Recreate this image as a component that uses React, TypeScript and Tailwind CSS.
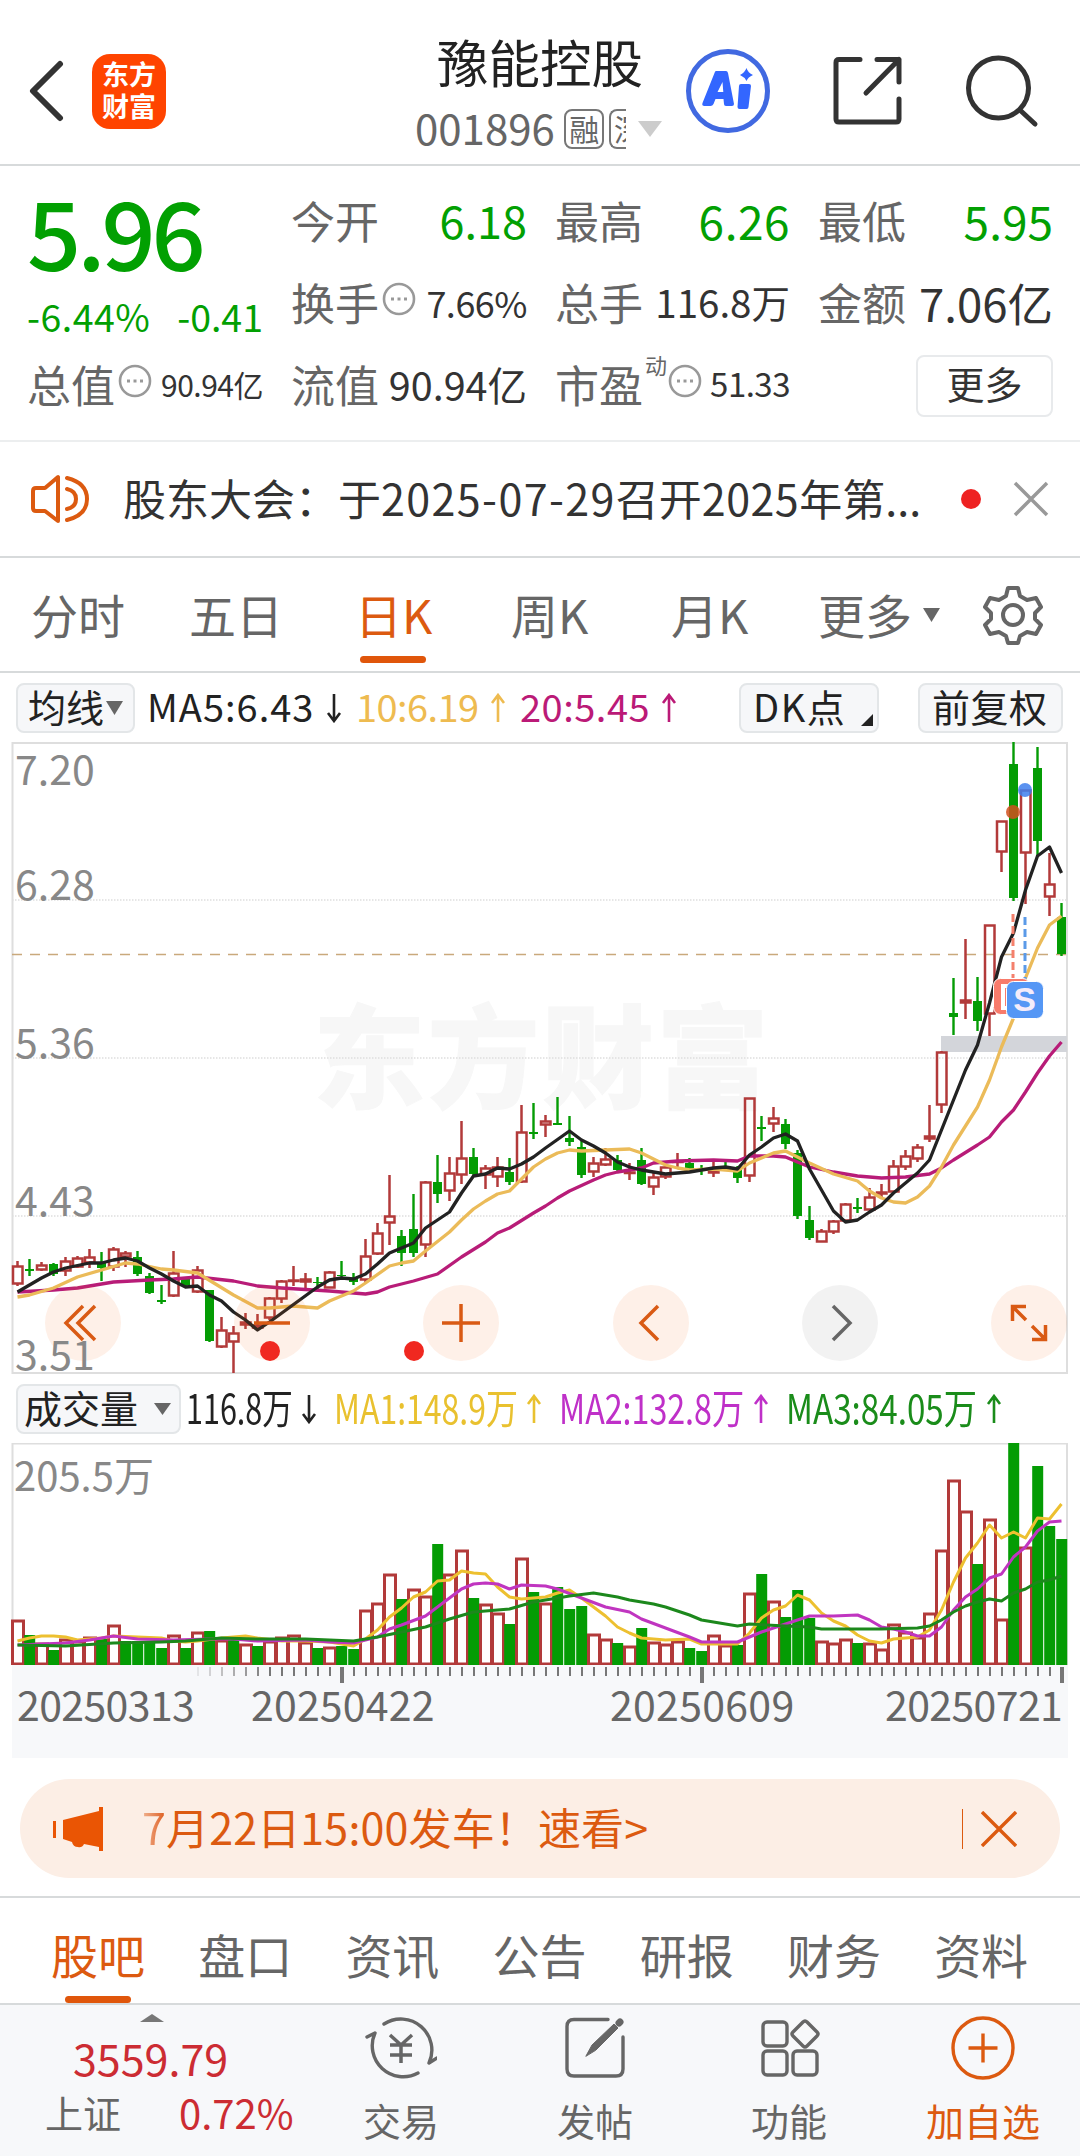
import type { ReactNode } from 'react';
import { clsx } from 'clsx';

// direction, high, body top, body bottom, low (chart space, y grows downwards)
type Candle = ['r' | 'g', number, number, number, number];
type Point = [number, number];

const RED = '#b23a3a';
const GREEN = '#049c04';
const FIRST_X = 17.5;
const STEP = 12;

const candles: Candle[] = [
    ['r', 1261, 1266, 1284, 1286], ['g', 1259, 1269, 1271, 1276], ['r', 1262, 1265, 1270, 1271], ['g', 1263, 1264, 1274, 1276],
    ['r', 1257, 1261, 1271, 1276], ['r', 1256, 1258, 1267, 1268], ['r', 1249, 1257, 1263, 1268], ['g', 1252, 1262, 1268, 1281],
    ['r', 1247, 1249, 1267, 1271], ['r', 1251, 1253, 1257, 1267], ['g', 1251, 1257, 1274, 1276], ['g', 1273, 1276, 1293, 1294],
    ['g', 1285, 1300, 1302, 1304], ['r', 1251, 1273, 1296, 1297], ['g', 1277, 1279, 1285, 1287], ['r', 1266, 1270, 1292, 1293],
    ['g', 1290, 1290, 1341, 1342], ['r', 1317, 1330, 1347, 1348], ['r', 1326, 1333, 1342, 1373], ['r', 1313, 1322, 1325, 1329],
    ['r', 1314, 1325, 1328, 1330], ['r', 1297, 1298, 1318, 1320], ['r', 1280, 1281, 1299, 1303], ['r', 1266, 1280, 1281, 1286],
    ['r', 1273, 1279, 1282, 1289], ['g', 1277, 1282, 1283, 1289], ['r', 1271, 1272, 1288, 1288], ['g', 1261, 1275, 1276, 1277],
    ['g', 1273, 1278, 1282, 1285], ['r', 1239, 1256, 1280, 1283], ['r', 1223, 1233, 1254, 1255], ['r', 1175, 1216, 1223, 1245],
    ['g', 1230, 1236, 1253, 1266], ['g', 1194, 1229, 1253, 1257], ['r', 1181, 1182, 1245, 1257], ['g', 1155, 1182, 1194, 1203],
    ['r', 1157, 1173, 1191, 1201], ['r', 1121, 1158, 1175, 1184], ['g', 1148, 1157, 1174, 1175], ['r', 1165, 1168, 1175, 1189],
    ['r', 1157, 1167, 1177, 1187], ['g', 1158, 1172, 1182, 1185], ['r', 1105, 1132, 1182, 1183], ['g', 1103, 1132, 1134, 1139],
    ['r', 1115, 1121, 1125, 1137], ['g', 1097, 1123, 1125, 1125], ['g', 1116, 1138, 1142, 1146], ['g', 1141, 1147, 1175, 1178],
    ['r', 1157, 1163, 1172, 1177], ['r', 1148, 1159, 1165, 1166], ['g', 1155, 1160, 1170, 1171], ['r', 1163, 1172, 1173, 1180],
    ['g', 1148, 1160, 1184, 1185], ['r', 1173, 1177, 1187, 1195], ['r', 1165, 1167, 1177, 1179], ['r', 1153, 1161, 1162, 1168],
    ['g', 1158, 1163, 1169, 1171], ['g', 1165, 1170, 1171, 1175], ['r', 1162, 1170, 1173, 1177], ['g', 1162, 1166, 1169, 1170],
    ['g', 1166, 1170, 1178, 1183], ['r', 1098, 1098, 1176, 1182], ['g', 1116, 1127, 1129, 1141], ['r', 1107, 1118, 1124, 1132],
    ['g', 1119, 1124, 1144, 1149], ['g', 1150, 1153, 1216, 1219], ['g', 1206, 1220, 1238, 1240], ['r', 1229, 1231, 1242, 1242],
    ['r', 1220, 1221, 1232, 1234], ['r', 1203, 1204, 1221, 1221], ['g', 1198, 1207, 1209, 1213], ['r', 1188, 1197, 1210, 1210],
    ['r', 1184, 1192, 1194, 1197], ['r', 1160, 1166, 1192, 1193], ['r', 1150, 1156, 1167, 1170], ['r', 1144, 1147, 1159, 1162],
    ['r', 1105, 1136, 1139, 1142], ['r', 1051, 1052, 1105, 1113], ['g', 978, 1013, 1017, 1035], ['r', 939, 1000, 1003, 1019],
    ['g', 977, 1001, 1021, 1031], ['r', 925, 925, 1014, 1036], ['r', 821, 821, 852, 872], ['g', 742, 764, 898, 901],
    ['r', 790, 790, 853, 904], ['g', 747, 768, 841, 856], ['r', 853, 884, 897, 916], ['g', 903, 917, 954, 956],
];

const volumeSides = 'rgrgrrrgrgggg' + 'rgrgrgrgrrrrgrgg' + 'rrrgrrgrrgrrgrgrggg' + 'rrgrgrrrggrrg' + 'rgrgggrrrgrrrrrrrr' + 'rgrrgrggg';
const volumeTops = [
    1620, 1635, 1643, 1650, 1639, 1641, 1637, 1639, 1625, 1641, 1641, 1643, 1648, 1635, 1648, 1632, 1631, 1640, 1640, 1644, 1646, 1641,
    1637, 1635, 1642, 1648, 1647, 1646, 1649, 1610, 1603, 1574, 1599, 1589, 1596, 1544, 1574, 1550, 1598, 1604, 1613, 1624, 1558, 1592,
    1603, 1587, 1609, 1606, 1634, 1639, 1643, 1646, 1628, 1642, 1644, 1641, 1648, 1651, 1635, 1645, 1645, 1593, 1574, 1601, 1617, 1590,
    1618, 1641, 1643, 1639, 1643, 1643, 1649, 1624, 1632, 1637, 1613, 1550, 1480, 1511, 1564, 1519, 1619, 1443, 1547, 1466, 1526, 1539,
];

const ma5: Point[] = [
    [0, 1292], [2, 1278], [3, 1272], [4, 1268], [6, 1263], [7, 1263], [8, 1260], [9, 1258], [10, 1261], [11, 1268], [12, 1274], [13, 1281],
    [14, 1287], [15, 1286], [16, 1295], [17, 1301], [18, 1312], [19, 1320], [20, 1330], [21, 1322], [25, 1287], [26, 1280], [27, 1278],
    [28, 1279], [29, 1274], [30, 1264], [31, 1253], [32, 1248], [33, 1243], [34, 1228], [35, 1220], [36, 1212], [37, 1193], [38, 1176],
    [39, 1174], [40, 1168], [41, 1169], [42, 1164], [43, 1157], [44, 1148], [46, 1131], [47, 1140], [48, 1146], [49, 1153], [50, 1162],
    [51, 1167], [52, 1170], [53, 1172], [54, 1174], [55, 1173], [56, 1172], [58, 1168], [59, 1167], [60, 1169], [61, 1155], [62, 1147],
    [63, 1138], [64, 1134], [65, 1141], [66, 1169], [67, 1190], [68, 1211], [69, 1222], [70, 1220], [71, 1212], [72, 1205], [73, 1193],
    [74, 1183], [75, 1173], [76, 1160], [77, 1130], [78, 1100], [79, 1070], [80, 1045], [81, 1003], [82, 957], [83, 933], [84, 890],
    [85, 856], [86, 847], [87, 873],
];
const ma10: Point[] = [
    [0, 1297], [1, 1295], [3, 1288], [5, 1277], [9, 1263], [10, 1264], [12, 1269], [13, 1270], [15, 1273], [18, 1295], [20, 1308], [21, 1308],
    [23, 1306], [25, 1308], [26, 1301], [28, 1291], [29, 1283], [31, 1266], [32, 1263], [33, 1261], [34, 1251], [36, 1232], [37, 1220],
    [38, 1209], [39, 1201], [40, 1194], [41, 1191], [42, 1179], [43, 1167], [44, 1159], [45, 1153], [46, 1150], [47, 1151], [49, 1150],
    [51, 1149], [52, 1153], [53, 1159], [54, 1165], [55, 1168], [56, 1170], [58, 1169], [60, 1171], [61, 1163], [62, 1158], [63, 1153],
    [64, 1151], [65, 1157], [66, 1163], [68, 1174], [70, 1181], [71, 1191], [72, 1198], [73, 1202], [74, 1203], [75, 1197], [76, 1186],
    [77, 1167], [78, 1145], [79, 1126], [80, 1107], [81, 1080], [82, 1047], [83, 1018], [84, 978], [85, 948], [86, 925], [87, 916],
];
const ma20: Point[] = [
    [0, 1292], [3, 1290], [5, 1288], [8, 1282], [11, 1280], [13, 1279], [15, 1277], [18, 1281], [20, 1286], [22, 1288], [26, 1291], [29, 1294],
    [30, 1292], [31, 1287], [33, 1281], [35, 1274], [37, 1257], [39, 1242], [40, 1233], [41, 1228], [43, 1213], [44, 1206], [45, 1198],
    [46, 1191], [48, 1180], [49, 1175], [50, 1172], [52, 1168], [53, 1163], [55, 1161], [58, 1160], [60, 1161], [61, 1156], [63, 1156],
    [64, 1157], [65, 1162], [66, 1167], [68, 1172], [70, 1176], [72, 1178], [74, 1177], [76, 1174], [77, 1168], [78, 1160], [80, 1145],
    [81, 1137], [82, 1122], [83, 1110], [84, 1092], [85, 1073], [86, 1056], [87, 1042],
];
const vol1: Point[] = [
    [0, 1641], [1, 1638], [2, 1636], [3, 1636], [4, 1637], [5, 1640], [7, 1638], [8, 1636], [10, 1637], [12, 1638], [13, 1641], [14, 1642],
    [15, 1641], [17, 1638], [19, 1636], [20, 1638], [22, 1641], [24, 1641], [26, 1642], [27, 1644], [28, 1646], [29, 1639], [30, 1630],
    [31, 1617], [32, 1608], [33, 1597], [34, 1592], [35, 1581], [36, 1580], [37, 1571], [38, 1573], [39, 1574], [40, 1587], [41, 1597],
    [42, 1599], [44, 1597], [45, 1593], [46, 1590], [47, 1598], [48, 1607], [49, 1616], [50, 1627], [51, 1633], [52, 1638], [54, 1640],
    [56, 1639], [57, 1644], [60, 1644], [61, 1633], [62, 1618], [63, 1610], [64, 1606], [65, 1595], [66, 1600], [67, 1613], [68, 1621],
    [69, 1626], [70, 1635], [71, 1641], [72, 1643], [73, 1639], [75, 1637], [76, 1630], [77, 1610], [78, 1582], [79, 1558], [80, 1543],
    [81, 1525], [82, 1538], [83, 1532], [84, 1538], [85, 1518], [86, 1519], [87, 1504],
];
const vol2: Point[] = [
    [0, 1645], [4, 1643], [6, 1640], [8, 1636], [10, 1639], [13, 1640], [16, 1639], [18, 1639], [20, 1641], [24, 1640], [26, 1642], [28, 1643],
    [29, 1640], [30, 1637], [31, 1629], [32, 1625], [34, 1616], [35, 1607], [36, 1598], [37, 1589], [38, 1584], [39, 1583], [40, 1584],
    [41, 1589], [42, 1585], [44, 1586], [45, 1589], [47, 1598], [49, 1607], [51, 1612], [52, 1619], [54, 1628], [56, 1637], [57, 1642],
    [60, 1642], [62, 1632], [64, 1624], [66, 1616], [68, 1616], [70, 1615], [71, 1620], [72, 1627], [73, 1629], [74, 1632], [75, 1636],
    [76, 1636], [77, 1627], [78, 1610], [79, 1597], [80, 1589], [81, 1578], [82, 1574], [83, 1557], [84, 1547], [85, 1531], [86, 1522], [87, 1521],
];
const vol3: Point[] = [
    [0, 1645], [4, 1646], [8, 1643], [12, 1642], [14, 1641], [17, 1638], [20, 1639], [24, 1639], [28, 1641], [29, 1639], [30, 1637], [32, 1632],
    [34, 1627], [36, 1619], [38, 1612], [40, 1610], [41, 1609], [43, 1602], [45, 1598], [46, 1596], [48, 1593], [50, 1597], [51, 1600],
    [53, 1604], [54, 1607], [56, 1615], [57, 1620], [60, 1626], [61, 1624], [64, 1626], [66, 1627], [67, 1629], [72, 1629], [75, 1628],
    [76, 1626], [77, 1620], [78, 1612], [79, 1606], [80, 1602], [81, 1599], [82, 1601], [83, 1593], [84, 1589], [85, 1582], [86, 1580], [87, 1576],
];

const xAt = (i: number) => FIRST_X + i * STEP;

function Line({ points, color, width = 3.3 }: { points: Point[]; color: string; width?: number }) {
    return (
        <polyline points={points.map(([i, y]) => `${xAt(i)},${y}`).join(' ')} fill="none" stroke={color} strokeWidth={width} strokeLinejoin="round" />
    );
}

function Arrow({ up = false, className }: { up?: boolean; className?: string }) {
    return (
        <svg viewBox="0 0 16 30" className={clsx('h-[30px] w-4 shrink-0', className)} fill="none" stroke="currentColor" strokeWidth="2.6">
            {up ? <path d="M8 29V2M2 10l6-8 6 8" /> : <path d="M8 1v27M2 20l6 8 6-8" />}
        </svg>
    );
}

function Caret({ className }: { className?: string }) {
    return (
        <svg viewBox="0 0 16 13" className={clsx('shrink-0', className)} fill="currentColor" preserveAspectRatio="none">
            <path d="M0 0h16L8 13z" />
        </svg>
    );
}

function InfoDot() {
    return (
        <svg viewBox="0 0 34 34" className="-mt-1.5 h-[34px] w-[34px] shrink-0" fill="none" stroke="#999" strokeWidth="2.6">
            <circle cx="17" cy="17" r="15" />
            <path d="M9 17h3M15.500 17h3M22 17h3" strokeWidth="3" />
        </svg>
    );
}

// text squeezed horizontally into a box of a fixed width
function Narrow({ children, className, scale }: { children: ReactNode; className?: string; scale: string }) {
    return (
        <span className={clsx('block shrink-0', className)}>
            <span className={clsx('block w-max origin-left text-[41px]', scale)}>{children}</span>
        </span>
    );
}

function Header() {
    return (
        <header className="flex h-[166px] items-center border-b-2 border-[#d7dadb] pt-[18px]">
            <svg viewBox="0 0 36 62" className="ml-[28px] h-[62px] w-9" fill="none" stroke="#333" strokeWidth="6" strokeLinecap="round" strokeLinejoin="round">
                <path d="M32 4L5 31l27 27" />
            </svg>
            <div className="ml-[28px] flex h-[75px] w-[74px] flex-col items-center justify-center rounded-[18px] bg-[#ff4400] pb-0.5 text-[27px] leading-none font-bold text-white">
                <span className="leading-[32px]">东方</span>
                <span className="leading-[32px]">财富</span>
            </div>
            <div className="mt-[10px] ml-[249px] w-[247px]">
                <div className="ml-[22px] flex h-[66px] items-center pb-1 text-[51.500px] whitespace-nowrap text-[#222]">豫能控股</div>
                <div className="flex h-[66px] items-center text-[#666]">
                    <span className="w-[150px] pb-1.5 text-[42px]">001896</span>
                    <span className="flex h-10 w-10 items-center justify-center rounded-lg border-2 border-[#777] pb-0.5 text-[30px] leading-none">融</span>
                    <span className="ml-[5px] flex h-10 w-[17px] items-center overflow-hidden rounded-l-lg border-2 border-r-0 border-[#777] pb-0.5 pl-[3px] text-[30px] leading-none">深</span>
                    <Caret className="ml-3 h-4 w-6 text-[#ccc]" />
                </div>
            </div>
            <svg viewBox="0 0 86 86" className="ml-[23px] h-[86px] w-[86px]">
                <circle cx="43" cy="43" r="39.500" fill="none" stroke="#4169e1" strokeWidth="5" />
                <path d="M31 23h10q1.500 0 2 2l6 31q0 2-2 2h-6q-2 0-2-2l-.5-5h-8l-2 5q-1 2-3 2h-6q-3 0-2-3l12-30q.5-2 1.500-2zM37.500 34l-5 10h5.800z" fill="#3366ff" fillRule="evenodd" />
                <path d="M56 36h8q2 0 2 2l-2.500 21q0 2-2 2h-7q-2 0-2-2L54 38q0-2 2-2zM61.500 20q1.500 5 6.500 7-5 2-6.500 6-2-4-6.500-6 4.500-2 6.500-7z" fill="#3366ff" />
            </svg>
            <svg viewBox="0 0 72 72" className="ml-[61px] h-[72px] w-[72px]" fill="none" stroke="#333" strokeWidth="5" strokeLinecap="round" strokeLinejoin="round">
                <path d="M28 4.500H7q-3 0-3 3V64q0 3 3 3h57q3 0 3-3V44M45 4.500h22V27M67 4.500L34 38" />
            </svg>
            <svg viewBox="0 0 74 74" className="ml-[61px] h-[74px] w-[74px]" fill="none" stroke="#333" strokeWidth="5" strokeLinecap="round">
                <circle cx="33.500" cy="34" r="30" />
                <path d="M56 57l14 13" />
            </svg>
        </header>
    );
}

function Quote({ label, value, className, dot }: { label: string; value: string; className: string; dot?: boolean }) {
    return (
        <div className="flex h-[82px] items-center pb-1 whitespace-nowrap">
            <span className="text-[44px] text-[#666]">{label}</span>
            {dot && <span className="ml-[3px]"><InfoDot /></span>}
            <span className={clsx('ml-auto', className)}>{value}</span>
        </div>
    );
}

function QuotePanel() {
    return (
        <section className="flex h-[276px] gap-[28px] border-b-2 border-[#eceeef] pt-[15px] pl-[27px]">
            <div className="w-[236px]">
                <div className="flex h-[109px] items-center pb-3 text-[95px] leading-none font-medium tracking-[-4px] text-[#02a002]">5.96</div>
                <div className="flex h-[55px] items-center justify-between pb-1 text-[37.500px] leading-none text-[#02a002]">
                    <span className="tracking-[0.500px]">-6.44%</span>
                    <span>-0.41</span>
                </div>
                <Quote label="总值" value="90.94亿" className="text-[30px] tracking-[-0.500px] text-[#333]" dot />
            </div>
            <div className="w-[236px]">
                <Quote label="今开" value="6.18" className="text-[45px] text-[#02a002]" />
                <Quote label="换手" value="7.66%" className="text-[36px] tracking-[-0.500px] text-[#333]" dot />
                <Quote label="流值" value="90.94亿" className="text-[39.500px] text-[#333]" />
            </div>
            <div className="w-[235px]">
                <Quote label="最高" value="6.26" className="text-[46px] tracking-[0.500px] text-[#02a002]" />
                <Quote label="总手" value="116.8万" className="text-[38.500px] text-[#333]" />
                <div className="flex h-[82px] items-center pb-1">
                    <span className="text-[44px] text-[#666]">市盈</span>
                    <span className="-mt-10 mr-px ml-0.5 text-[22px] text-[#666]">动</span>
                    <InfoDot />
                    <span className="ml-auto text-[33px] tracking-[-0.500px] text-[#333]">51.33</span>
                </div>
            </div>
            <div className="w-[235px]">
                <Quote label="最低" value="5.95" className="text-[46px] text-[#02a002]" />
                <Quote label="金额" value="7.06亿" className="text-[45.500px] text-[#333]" />
                <div className="flex h-[82px] items-center justify-end">
                    <button className="h-[62px] w-[137px] rounded-lg border-2 border-[#e8eaec] pb-1.5 text-[38px] leading-none text-[#333]">更多</button>
                </div>
            </div>
        </section>
    );
}

function Notice() {
    return (
        <section className="flex h-[116px] items-center border-b-2 border-[#d7dadb]">
            <svg viewBox="0 0 58 50" className="ml-[31px] h-[50px] w-[58px]" fill="none" stroke="#dc5a10" strokeWidth="4" strokeLinejoin="round" strokeLinecap="round">
                <path d="M5 14h9L27 3v44L14 37H5q-3 0-3-3V17q0-3 3-3z" />
                <path d="M36 4q20 5 20 21T36 46M36 15q9 2 9 10t-9 10" />
            </svg>
            <span className="ml-[34px] w-[800px] pb-1 text-[43px] whitespace-nowrap text-[#333]">
                股东大会：于<span className="tracking-[1.400px]">2025-07-29</span>召开<span className="tracking-[0.500px]">2025</span>年第...
            </span>
            <span className="ml-[38px] h-5 w-5 rounded-full bg-[#ee2222]" />
            <svg viewBox="0 0 36 36" className="ml-8 h-9 w-9" stroke="#999" strokeWidth="3.5">
                <path d="M2 2l32 32M34 2L2 34" />
            </svg>
        </section>
    );
}

const periods = [
    { label: '分时', box: 'ml-[31px] w-[158px]' },
    { label: '五日', box: 'w-[168px]' },
    { label: '日K', box: 'w-[154px]', active: true },
    { label: '周K', box: 'w-[160px]' },
    { label: '月K', box: 'w-[147px]' },
    { label: '更多', box: 'w-[105px]' },
];

function PeriodTabs() {
    return (
        <nav className="flex h-[115px] items-center border-b-2 border-[#d7dadb] text-[47px] text-[#666]">
            {periods.map(({ label, box, active }) => (
                <div key={label} className={clsx('relative h-full shrink-0 pt-[22px] leading-[68px]', box, active && 'text-[#dc5a10]')}>
                    {active ? <span className="-ml-0.5">{label}</span> : label}
                    {active && <span className="absolute bottom-2 left-[3px] h-[7px] w-[66px] rounded-full bg-[#e0560b]" />}
                </div>
            ))}
            <Caret className="h-3.5 w-[17px]" />
            <svg viewBox="0 0 60 60" className="ml-[43px] h-[60px] w-[60px]" fill="none" stroke="currentColor" strokeWidth="4" strokeLinejoin="round">
                <path d="M25 3h10l2 8 7 4 9-2 5 9-6 6v6l6 6-5 9-9-2-7 4-2 7H25l-2-7-7-4-9 2-5-9 6-6v-6l-6-6 5-9 9 2 7-4z" />
                <circle cx="30" cy="30" r="10" />
            </svg>
        </nav>
    );
}

const chip = 'flex shrink-0 items-center rounded-lg border-2 border-[#e3e6e8] bg-[#f6f7f9] text-[38px] leading-none whitespace-nowrap text-[#222]';

function AverageRow() {
    return (
        <div className="flex h-[69px] items-center text-[38px] text-[#222]">
            <div className={clsx(chip, 'ml-4 h-[50px] w-[119px] pl-2.5')}>
                <span className="pb-1">均线</span>
                <Caret className="ml-0.5 h-3.5 w-[17px] text-[#666]" />
            </div>
            <span className="ml-[12px] w-[176px] pb-1 tracking-[1px]">MA5:6.43</span>
            <Arrow className="ml-[3px]" />
            <span className="ml-[14px] w-[134px] pb-1 tracking-[-0.600px] text-[#eebb50]">10:6.19</span>
            <Arrow up className="text-[#eebb50]" />
            <span className="ml-[14px] w-[141px] pb-1 tracking-[0.500px] text-[#bb1a77]">20:5.45</span>
            <Arrow up className="text-[#bb1a77]" />
            <div className={clsx(chip, 'ml-[62px] h-[50px] w-[140px] pl-3')}>
                <span className="pb-1 tracking-[1.500px]">DK点</span>
                <svg viewBox="0 0 12 12" className="mt-6 ml-auto mr-1 h-3 w-3"><path d="M12 0v12H0z" fill="#222" /></svg>
            </div>
            <div className={clsx(chip, 'ml-[39px] h-[50px] w-[145px] pb-1 pl-3 tracking-[0.500px]')}>前复权</div>
        </div>
    );
}

function KButton({ children, grey }: { children: ReactNode; grey?: boolean }) {
    return (
        <button className={clsx('flex h-[76px] w-[76px] items-center justify-center rounded-full', grey ? 'bg-black/5 text-[#666]' : 'bg-[#f86a20]/10 text-[#d95a14]')}>
            <svg viewBox="0 0 40 40" className="h-10 w-10" fill="none" stroke="currentColor" strokeWidth="3.5">{children}</svg>
        </button>
    );
}

function PriceChart() {
    const labels = [
        { text: '7.20', top: 'top-0' },
        { text: '6.28', top: 'top-[115px]' },
        { text: '5.36', top: 'top-[273px]' },
        { text: '4.43', top: 'top-[431px]' },
        { text: '3.51', top: 'top-[585px]' },
    ];
    return (
        <div className="relative h-[632px]">
            <svg viewBox="0 742 1080 632" className="block h-[632px] w-[1080px]">
                <text x="313" y="1100" fontSize="112" fontWeight="900" letterSpacing="2.5" fill="#f7f7f7" stroke="#f7f7f7" strokeWidth="1">东方财富</text>
                {[900, 1058, 1216].map(y => (
                    <path key={y} d={`M12 ${y}H1067`} stroke="#dedede" strokeWidth="1.500" strokeDasharray="1.500 1.500" />
                ))}
                <rect x="12.500" y="743" width="1054.500" height="630" fill="none" stroke="#dedede" strokeWidth="2" />
                <rect x="941" y="1036" width="126" height="16" fill="#d3d5da" />
                <path d="M12 954.500H1067" stroke="#c9a97c" strokeWidth="1.300" strokeDasharray="10 8" />
                {candles.map(([side, high, top, bottom, low], i) => {
                    const x = xAt(i);
                    if (side === 'g') {
                        return (
                            <g key={i} fill={GREEN}>
                                <rect x={x - 1.2} y={high} width="2.4" height={low - high} />
                                <rect x={x - 4.5} y={top} width="9" height={bottom - top} />
                            </g>
                        );
                    }
                    return (
                        <g key={i} stroke={RED} strokeWidth="2.5" fill="none">
                            <path d={`M${x} ${high}V${top}M${x} ${bottom}V${low}`} />
                            <rect x={x - 4.5} y={top + 0.5} width="9.500" height={Math.max(bottom - top - 1, 0.5)} />
                        </g>
                    );
                })}
                <g opacity="0.85">
                    <circle cx="1013" cy="812" r="7" fill="#d2501e" />
                    <circle cx="1025" cy="790" r="7" fill="#3f80ee" />
                </g>
                <Line points={ma20} color="#b81c78" />
                <Line points={ma10} color="#ebbb59" />
                <Line points={ma5} color="#222" />
                <path d="M1013 914v64" stroke="#f4806c" strokeWidth="3" strokeDasharray="8 4" />
                <path d="M1025 917v64" stroke="#5b9ae8" strokeWidth="3" strokeDasharray="8 4" />
                <rect x="993.500" y="978.500" width="36" height="36" rx="7" fill="#f87b6b" stroke="#fff" />
                <path d="M1008 986h-5v22h5" fill="none" stroke="#fff" strokeWidth="4" />
                <rect x="1006.500" y="981.500" width="37" height="37" rx="7" fill="#5597f5" stroke="#fff" />
                <text x="1024.500" y="1011" fontSize="34" fontWeight="bold" textAnchor="middle" fill="#f4ecfa" className="font-['Liberation_Sans',sans-serif]">S</text>
            </svg>
            <div className="absolute bottom-[13px] left-[45px] flex w-[1022px] justify-between">
                <KButton><path d="M20 3L3 20l17 17M32 3L15 20l17 17" /></KButton>
                <KButton><path d="M2 20h36" /></KButton>
                <KButton><path d="M1 20h38M20 1v38" /></KButton>
                <KButton><path d="M27 3L10 20l17 17" /></KButton>
                <KButton grey><path d="M13 3l17 17-17 17" /></KButton>
                <KButton><path d="M17 3.500H3.500V18M4 4l13 13M23 36.500h13.500V22M36 36L23 23" /></KButton>
            </div>
            <span className="absolute bottom-[13px] left-[260px] h-5 w-5 rounded-full bg-[#f02820]" />
            <span className="absolute bottom-[13px] left-[404px] h-5 w-5 rounded-full bg-[#f02820]" />
            {labels.map(({ text, top }) => (
                <span key={text} className={clsx('absolute left-[15px] text-[41px] leading-[50px] text-[#888]', top)}>{text}</span>
            ))}
        </div>
    );
}

function VolumeRow() {
    return (
        <div className="flex h-[69px] items-center text-[#222]">
            <div className={clsx(chip, 'ml-4 h-[50px] w-[165px] pl-1.5')}>
                <span className="pb-1">成交量</span>
                <Caret className="ml-4 h-3 w-[17px] text-[#666]" />
            </div>
            <Narrow scale="scale-x-[0.745]" className="ml-[5px] w-[114px] pb-1">116.8万</Narrow>
            <Arrow className="ml-px" />
            <Narrow scale="scale-x-[0.78]" className="ml-[17px] w-[192px] pb-1 text-[#e9c12f]">MA1:148.9万</Narrow>
            <Arrow up className="text-[#e9c12f]" />
            <Narrow scale="scale-x-[0.785]" className="ml-[17px] w-[194px] pb-1 text-[#bf30c8]">MA2:132.8万</Narrow>
            <Arrow up className="text-[#bf30c8]" />
            <Narrow scale="scale-x-[0.81]" className="ml-[17px] w-[200px] pb-1 text-[#1a8c1a]">MA3:84.05万</Narrow>
            <Arrow up className="text-[#1a8c1a]" />
        </div>
    );
}

function VolumeChart() {
    return (
        <div className="relative h-[222px]">
            <svg viewBox="0 1443 1080 222" className="block h-[222px] w-[1080px]">
                <path d="M12.500 1665V1443.500H1067V1665" fill="none" stroke="#dedede" strokeWidth="2" />
                {volumeTops.map((top, i) =>
                    volumeSides[i] === 'g' ? (
                        <rect key={i} x={xAt(i) - 5.3} y={top} width="11" height={1665 - top} fill={GREEN} />
                    ) : (
                        <rect key={i} x={xAt(i) - 5} y={top + 1} width="11" height={1663 - top} fill="#fff" stroke={RED} strokeWidth="3" />
                    ),
                )}
                <Line points={vol1} color="#edc030" width={3} />
                <Line points={vol2} color="#c035c0" width={3} />
                <Line points={vol3} color="#1c881c" width={3} />
            </svg>
            <span className="absolute top-1.5 left-3.5 text-[40px] leading-[50px] text-[#888]">205.5万</span>
        </div>
    );
}

function DateAxis() {
    const ticks = Array.from({ length: 73 }, (_, k) => 198 + k * 12);
    return (
        <div className="mr-3 ml-3 h-[93px] bg-[#f7f8fa] text-[#666]">
            <svg viewBox="12 1665 1056 22" className="block h-[22px] w-[1056px]" stroke="#777">
                {ticks.map((x, k) => {
                    const major = k % 30 === 12 || k === 72;
                    return <path key={x} d={`M${x} 1667v${major ? 16 : 9}`} strokeWidth={major ? 4 : 2} opacity={Math.min(1, (k + 1) / 7)} />;
                })}
            </svg>
            <div className="flex text-[41px] leading-[33px]">
                <span className="ml-[5px] w-[234px] tracking-[-0.600px]">20250313</span>
                <span className="w-[359px] tracking-[0.200px]">20250422</span>
                <span className="w-[275px] tracking-[0.300px]">20250609</span>
                <span className="tracking-[-0.600px]">20250721</span>
            </div>
        </div>
    );
}

function Banner() {
    return (
        <div className="mx-5 mt-[21px] flex h-[99px] items-center rounded-full bg-[#fceee5] text-[#dc5a10]">
            <svg viewBox="0 0 52 44" className="ml-8 h-11 w-[52px]" fill="#ea5504">
                <path d="M1 14h3v17H1zM11 13L47 4V0h4v44h-4v-4l-15-3q-2 4-6 3-5 0-6-5l-9-3z" />
            </svg>
            <span className="ml-[38px] w-[600px] pb-1 text-[43px] tracking-[0.150px] whitespace-nowrap">
                <span className="bg-gradient-to-r from-[#efb28e] to-[#dc5a10] bg-clip-text text-transparent">7</span>月22日15:00发车！速看&gt;
            </span>
            <span className="ml-[220px] h-10 w-px bg-[#dc5a10]" />
            <svg viewBox="0 0 36 36" className="ml-[18px] h-9 w-9" stroke="currentColor" strokeWidth="3.4">
                <path d="M1 1l34 34M35 1L1 35" />
            </svg>
        </div>
    );
}

function SectionTabs() {
    const tabs = ['股吧', '盘口', '资讯', '公告', '研报', '财务', '资料'];
    return (
        <nav className="mt-[18px] flex h-[109px] border-t-2 border-b-2 border-[#d7dadb] pl-[51px] text-[47px] text-[#666]">
            {tabs.map((tab, i) => (
                <div key={tab} className={clsx('relative w-[147.200px] shrink-0 pt-[22px] leading-[68px]', i === 0 && 'text-[#dc5a10]')}>
                    {tab}
                    {i === 0 && <span className="absolute bottom-0 left-[14px] h-[7px] w-[66px] rounded-full bg-[#e0560b]" />}
                </div>
            ))}
        </nav>
    );
}

function Action({ label, className, children }: { label: string; className: string; children: ReactNode }) {
    return (
        <div className={clsx('flex w-[140px] shrink-0 flex-col items-center pt-[9px]', className)}>
            <svg viewBox="0 0 72 68" className="h-[68px] w-[72px]" fill="none" stroke="currentColor" strokeWidth="3.4" strokeLinejoin="round" strokeLinecap="round">
                {children}
            </svg>
            <span className="mt-[13px] text-[38px] leading-[50px] whitespace-nowrap">{label}</span>
        </div>
    );
}

function BottomBar() {
    return (
        <footer className="flex h-[152px] bg-[#f7f8fa] text-[#666]">
            <div className="w-[331px]">
                <svg viewBox="0 0 24 8" className="mt-[9px] ml-10 h-2 w-[224px]" fill="#777"><path d="M0 8L12 0l12 8z" /></svg>
                <div className="mt-[7px] ml-[73px] text-[43px] leading-[56px] text-[#cc2c33]">3559.79</div>
                <div className="flex items-center leading-[54px]">
                    <span className="ml-[45px] w-[134px] text-[38px]">上证</span>
                    <span className="text-[40px] text-[#cc2c33]">0.72%</span>
                </div>
            </div>
            <Action label="交易" className="ml-0">
                <path d="M19 10A31 31 0 0 1 64 49l8-5M53 59A31 31 0 0 1 10 19l-8 4" />
                <path d="M25 21l11 10 11-10M25 31h22M25 41h22M36 31v18" strokeLinecap="butt" strokeWidth="3.500" />
            </Action>
            <Action label="发帖" className="ml-[54px]">
                <path d="M49 5.500H15q-7 0-7 7V55q0 7 7 7h42q7 0 7-7V23" />
                <path d="M27 42l6-11 22-21 4 4-22 22z" fill="currentColor" strokeWidth="1" />
                <path d="M60 9l1-1" strokeWidth="7" />
            </Action>
            <Action label="功能" className="ml-[54px]">
                <rect x="10" y="8" width="24" height="24" rx="4" />
                <rect x="10" y="37" width="24" height="24" rx="4" />
                <rect x="40" y="37" width="24" height="24" rx="4" />
                <path d="M50 8q2-2 4 0l10 10q2 2 0 4L54 32q-2 2-4 0L40 22q-2-2 0-4z" />
            </Action>
            <Action label="加自选" className="ml-[54px] text-[#dc5a10]">
                <circle cx="36" cy="34" r="30" />
                <path d="M21.500 34h29M36 19.500v29" strokeLinecap="butt" />
            </Action>
        </footer>
    );
}

export default function App() {
    return (
        <div className="h-[2156px] w-[1080px] overflow-hidden bg-white font-['Noto_Sans_CJK_SC',sans-serif] leading-normal">
            <Header />
            <QuotePanel />
            <Notice />
            <PeriodTabs />
            <AverageRow />
            <PriceChart />
            <VolumeRow />
            <VolumeChart />
            <DateAxis />
            <Banner />
            <SectionTabs />
            <BottomBar />
        </div>
    );
}
